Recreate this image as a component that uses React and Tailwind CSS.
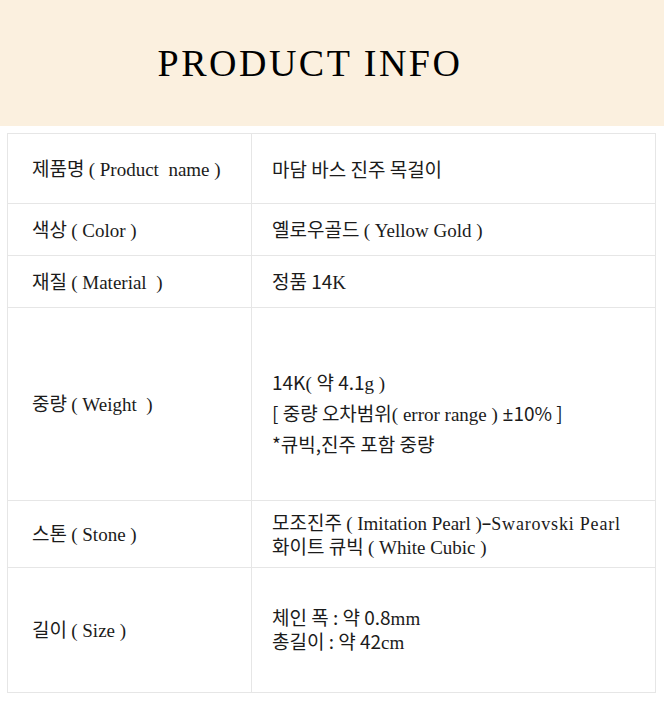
import React from 'react';

const SERIF = 'font-[Liberation_Serif,Noto_Sans_CJK_KR,serif]';

function En({ children, className = '' }) {
  return <span className={`${SERIF} ${className}`}>{children}</span>;
}

function Row({ h, label, children, last }) {
  return (
    <div className={`flex ${h} ${last ? '' : 'border-b border-[#e6e6e6]'}`}>
      <div className="w-[244px] shrink-0 border-r border-[#e6e6e6] flex items-center pl-6">
        {label}
      </div>
      <div className="flex-1 flex items-center pl-5">
        <div>{children}</div>
      </div>
    </div>
  );
}

export default function App() {
  return (
    <div className="w-[664px] h-[701px] bg-white text-[#1b1b1b] text-[19px] leading-[22px] font-[Noto_Sans_CJK_KR,Noto_Sans,sans-serif]">
      <div className="h-[126px] bg-[#fbf0df] flex items-center justify-center pr-[44px]">
        <h1 className={`text-[38px] leading-none text-black tracking-[2.5px] ${SERIF}`}>
          PRODUCT INFO
        </h1>
      </div>

      <div className="mx-[7px] mt-[7px] w-[649px] border border-[#e6e6e6]">
        <Row h="h-[70px]" label={<span>제품명 <En>( Product&nbsp;&nbsp;name )</En></span>}>
          마담 바스 진주 목걸이
        </Row>
        <Row h="h-[52px]" label={<span>색상 <En>( Color )</En></span>}>
          옐로우골드 <En>( Yellow Gold )</En>
        </Row>
        <Row h="h-[52px]" label={<span>재질 <En>( Material&nbsp;&nbsp;)</En></span>}>
          정품 14<En>K</En>
        </Row>
        <Row h="h-[193px]" label={<span>중량 <En>( Weight&nbsp;&nbsp;)</En></span>}>
          <div className="leading-[29px] mt-[16px]">
            <div>14K<En>( </En>약 4.1<En>g )</En></div>
            <div>
              [ 중량 오차범위<En>( error range ) </En>
              <span className="font-[Noto_Sans,sans-serif]">±</span>10% ]
            </div>
            <div>*큐빅,진주 포함 중량</div>
          </div>
        </Row>
        <Row h="h-[67px]" label={<span>스톤 <En>( Stone )</En></span>}>
          <div className="leading-[21px]">
            <div>
              모조진주 <En>( Imitation Pearl )</En>
              <span className="font-[Noto_Sans,sans-serif]">–</span>
              <En className="text-[18px] tracking-[0.8px]">Swarovski Pearl</En>
            </div>
            <div>화이트 큐빅 <En>( White Cubic )</En></div>
          </div>
        </Row>
        <Row h="h-[124px]" label={<span>길이 <En>( Size )</En></span>} last>
          <div className="leading-[22px]">
            <div>체인 폭 : 약 0.8<En>mm</En></div>
            <div>총길이 : 약 42<En>cm</En></div>
          </div>
        </Row>
      </div>
    </div>
  );
}
